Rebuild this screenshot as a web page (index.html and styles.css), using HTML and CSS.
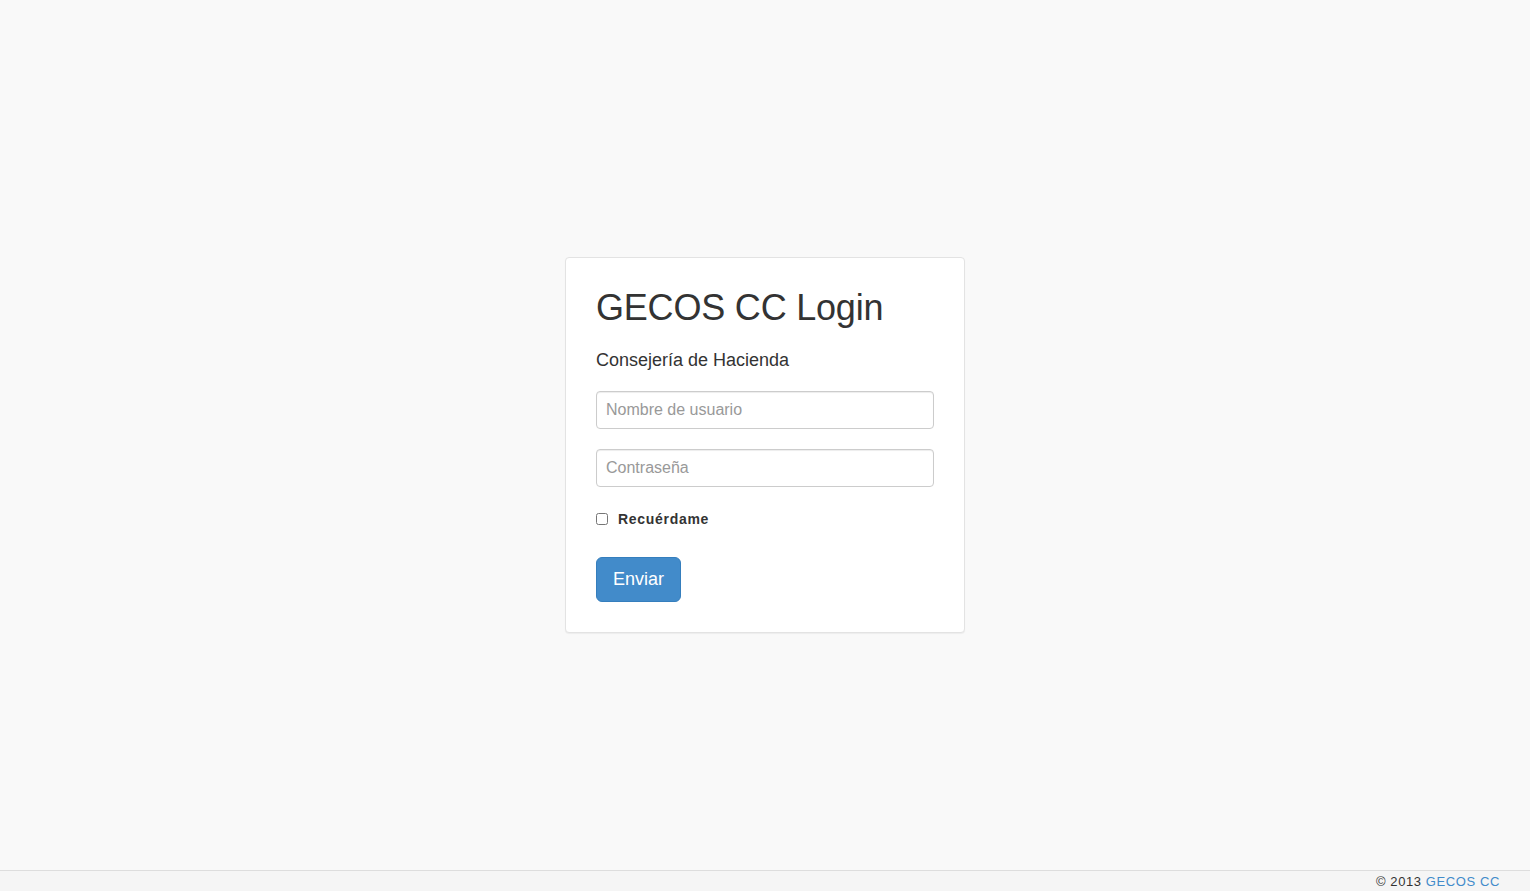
FILE: index.html
```html
<!DOCTYPE html>
<html lang="es">
<head>
<meta charset="utf-8">
<title>GECOS CC Login</title>
<link rel="stylesheet" href="styles.css">
</head>
<body>
<main class="main">
  <form class="login-card">
    <h1 class="login-title">GECOS CC Login</h1>
    <h4 class="login-subtitle">Consejería de Hacienda</h4>
    <input class="field" type="text" placeholder="Nombre de usuario">
    <input class="field" type="password" placeholder="Contraseña">
    <label class="remember"><input type="checkbox" class="remember-box"><span>Recuérdame</span></label>
    <button type="button" class="btn-submit">Enviar</button>
  </form>
</main>
<footer class="footer">
  <span>© 2013 <a href="#" class="footer-link">GECOS CC</a></span>
</footer>
</body>
</html>
```
FILE: styles.css
```css
* { box-sizing: border-box; }
html, body { height: 100%; }
body {
  margin: 0;
  background: #f9f9f9;
  font-family: "Liberation Sans", Arial, sans-serif;
  color: #333;
  font-size: 14px;
  display: flex;
  flex-direction: column;
}
.main {
  flex: 1;
  display: flex;
  align-items: center;
  justify-content: center;
  padding-top: 20px;
}
.login-card {
  width: 400px;
  background: #fff;
  border: 1px solid #e3e3e3;
  border-radius: 4px;
  box-shadow: 0 1px 1px rgba(0,0,0,0.05);
  padding: 30px 30px 30px;
  display: flex;
  flex-direction: column;
  align-items: flex-start;
}
.login-title {
  margin: 0 0 24px;
  font-size: 36px;
  font-weight: 400;
  line-height: 1.1;
  letter-spacing: -0.2px;
  color: #333;
}
.login-subtitle {
  margin: 0 0 20px;
  font-size: 18px;
  font-weight: 400;
  line-height: 1.1;
  color: #333;
}
.field {
  width: 100%;
  height: 38px;
  padding: 6px 9px;
  font-family: "Liberation Sans", Arial, sans-serif;
  font-size: 16px;
  color: #555;
  border: 1px solid #ccc;
  border-radius: 4px;
  background: #fff;
  box-shadow: inset 0 1px 1px rgba(0,0,0,0.075);
  margin: 0 0 20px;
}
.field::placeholder { color: #999; }
.remember {
  display: flex;
  align-items: center;
  font-weight: 700;
  font-size: 14px;
  letter-spacing: 0.7px;
  margin: 4px 0 30px 0;
}
.remember-box {
  width: 12px;
  height: 12px;
  margin: 0 10px 0 0;
}
.btn-submit {
  font-family: "Liberation Sans", Arial, sans-serif;
  font-size: 18px;
  line-height: 1.33;
  padding: 10px 16px;
  height: 45px;
  color: #fff;
  background: #428bca;
  border: 1px solid #357ebd;
  border-radius: 6px;
}
.footer {
  height: 21px;
  background: #f5f5f5;
  border-top: 1px solid #ddd;
  display: flex;
  justify-content: flex-end;
  align-items: center;
  padding: 0 30px;
  font-size: 13px;
  letter-spacing: 0.6px;
}
.footer-link { color: #428bca; text-decoration: none; }
```
